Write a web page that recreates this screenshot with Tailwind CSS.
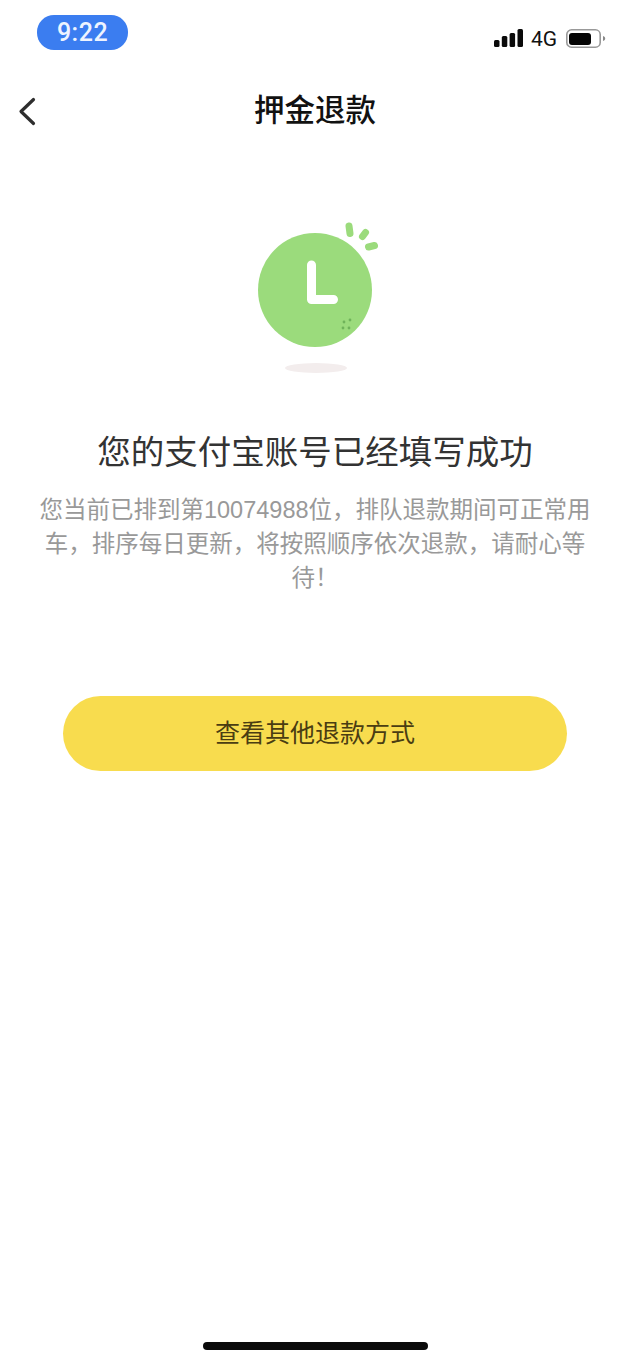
<!DOCTYPE html>
<html lang="zh-CN">
<head>
<meta charset="utf-8">
<script src="https://cdn.jsdelivr.net/npm/@tailwindcss/browser@4"></script>
</head>
<body class="bg-white">
<div class="relative w-[630px] h-[1363px] overflow-hidden bg-white font-['Liberation_Sans','Noto_Sans_CJK_SC',sans-serif] flex flex-col">
  <!-- status bar -->
  <div class="h-[72px] pt-[15px] pl-[37px] pr-[24px] flex justify-between items-start shrink-0">
    <div class="w-[91px] h-[35px] rounded-[17px] bg-[#3b7df0] text-[#eef4ff] text-[25px] leading-[35px] text-center font-medium font-['Roboto',sans-serif] tracking-[0.5px]">9:22</div>
    <div class="flex items-center gap-[8px] mt-[14px] h-[19px]">
      <svg class="w-[29px] h-[18px] -mt-[1px]" viewBox="0 0 29 18" fill="#0a0a0a"><rect x="0" y="11" width="5.500" height="7" rx="1.500"/><rect x="7.800" y="7" width="5.500" height="11" rx="1.500"/><rect x="15.600" y="4" width="5.500" height="14" rx="1.500"/><rect x="23.500" y="0" width="5.500" height="18" rx="1.500"/></svg>
      <span class="text-[21px] leading-[19px] text-[#111] font-['Roboto',sans-serif] mt-[1px]">4G</span>
      <svg class="w-[40px] h-[19px] ml-[1px]" viewBox="0 0 40 19"><rect x="0.800" y="0.800" width="33.400" height="17.400" rx="4.800" fill="none" stroke="#999" stroke-width="1.600"/><rect x="3" y="4" width="22" height="12" rx="3" fill="#050505"/><path d="M37 7c1.500.4 2.200 1.300 2.200 2.500s-.7 2.100-2.200 2.500z" fill="#888"/></svg>
    </div>
  </div>
  <!-- nav -->
  <div class="relative h-[78px] flex items-center justify-center shrink-0">
    <svg class="absolute left-[17px] top-[24px] w-[20px] h-[30px]" viewBox="0 0 20 30" fill="none" stroke="#2e2e2e" stroke-width="3.200" stroke-linecap="round" stroke-linejoin="round"><path d="M16.500 3.500 L4 15.500 L16.500 27.500"/></svg>
    <h1 class="text-[30.5px] leading-[40px] font-medium text-[#111] mt-[-2px]">押金退款</h1>
  </div>
  <!-- illustration -->
  <div class="flex justify-center mt-[70px] shrink-0">
    <svg class="w-[140px] h-[160px]" viewBox="0 0 140 160">
      <ellipse cx="71" cy="148" rx="31" ry="5" fill="#f3eded"/>
      <circle cx="70" cy="70" r="57" fill="#9bdb7c"/>
      <path d="M66.500 45 V79.500 H88.500" fill="none" stroke="#fff" stroke-width="9" stroke-linecap="round" stroke-linejoin="round"/>
      <g stroke="#9bdb7c" stroke-width="7" stroke-linecap="round">
        <path d="M104 6 L105 13.500"/>
        <path d="M117.500 16.500 L120.500 12.500"/>
        <path d="M123.500 27 L129.500 25.500"/>
      </g>
      <g fill="#6fb35a">
        <circle cx="99" cy="102" r="1.400"/><circle cx="105" cy="100" r="1.400"/><circle cx="98" cy="108" r="1.400"/><circle cx="104" cy="108" r="1.400"/>
      </g>
    </svg>
  </div>
  <!-- text -->
  <h2 class="mt-[51px] text-center text-[33.5px] leading-[44px] font-normal text-[#333]">您的支付宝账号已经填写成功</h2>
  <p class="mt-[18px] mx-auto w-[560px] text-center text-[23.5px] leading-[34px] text-[#999]">您当前已排到第10074988位，排队退款期间可正常用车，排序每日更新，将按照顺序依次退款，请耐心等待！</p>
  <!-- button -->
  <div class="mt-[101px] mx-auto w-[504px] h-[75px] rounded-full bg-[#f8dc4e] flex items-center justify-center text-[25px] text-[#4a3d12]">查看其他退款方式</div>
  <!-- home indicator -->
  <div class="absolute bottom-[13px] left-[203px] w-[225px] h-[8px] rounded-full bg-[#0a0a0a]"></div>
</div>
</body>
</html>
